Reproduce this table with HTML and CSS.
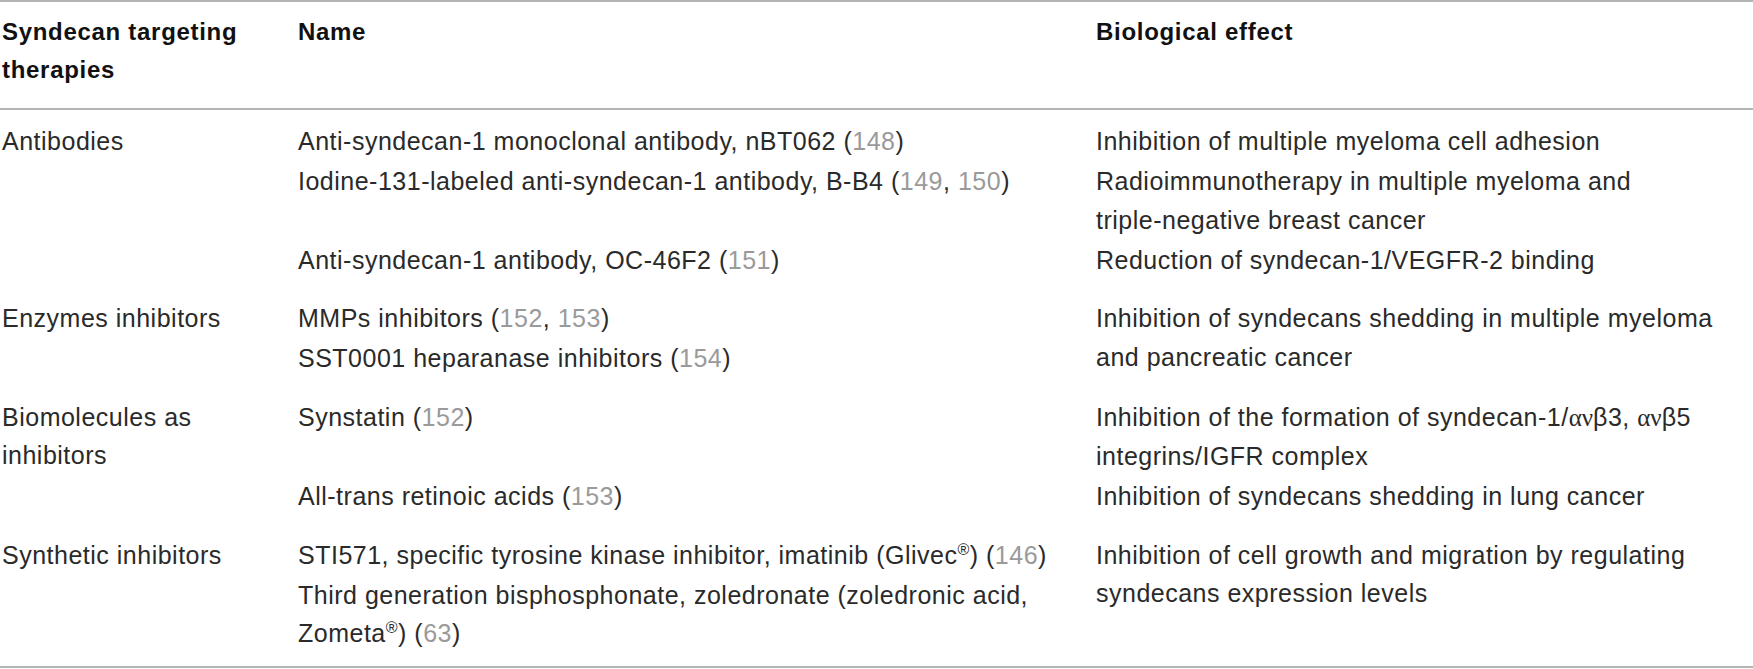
FILE: index.html
```html
<!DOCTYPE html>
<html lang="en">
<head>
<meta charset="utf-8">
<title>Syndecan targeting therapies</title>
<link rel="stylesheet" href="styles.css">
</head>
<body>
<div class="tbl">
  <div class="head">
    <div class="c1">Syndecan targeting<br>therapies</div>
    <div class="c2">Name</div>
    <div class="c3">Biological effect</div>
  </div>

  <div class="group first">
    <div class="c1 span3">Antibodies</div>
    <div class="c2">Anti-syndecan-1 monoclonal antibody, nBT062 (<span class="ref">148</span>)</div>
    <div class="c3">Inhibition of multiple myeloma cell adhesion</div>
    <div class="c2">Iodine-131-labeled anti-syndecan-1 antibody, B-B4 (<span class="ref">149</span>, <span class="ref">150</span>)</div>
    <div class="c3">Radioimmunotherapy in multiple myeloma and<br>triple-negative breast cancer</div>
    <div class="c2">Anti-syndecan-1 antibody, OC-46F2 (<span class="ref">151</span>)</div>
    <div class="c3">Reduction of syndecan-1/VEGFR-2 binding</div>
  </div>

  <div class="group">
    <div class="c1 span2">Enzymes inhibitors</div>
    <div class="c2">MMPs inhibitors (<span class="ref">152</span>, <span class="ref">153</span>)</div>
    <div class="c3 span2">Inhibition of syndecans shedding in multiple myeloma<br>and pancreatic cancer</div>
    <div class="c2">SST0001 heparanase inhibitors (<span class="ref">154</span>)</div>
  </div>

  <div class="group">
    <div class="c1 span2">Biomolecules as<br>inhibitors</div>
    <div class="c2">Synstatin (<span class="ref">152</span>)</div>
    <div class="c3">Inhibition of the formation of syndecan-1/<span class="gr">αν</span>β3, <span class="gr">αν</span>β5<br>integrins/IGFR complex</div>
    <div class="c2">All-trans retinoic acids (<span class="ref">153</span>)</div>
    <div class="c3">Inhibition of syndecans shedding in lung cancer</div>
  </div>

  <div class="group last">
    <div class="c1 span2">Synthetic inhibitors</div>
    <div class="c2">STI571, specific tyrosine kinase inhibitor, imatinib (Glivec<sup>®</sup>) (<span class="ref">146</span>)</div>
    <div class="c3 span2">Inhibition of cell growth and migration by regulating<br>syndecans expression levels</div>
    <div class="c2">Third generation bisphosphonate, zoledronate (zoledronic acid,<br>Zometa<sup>®</sup>) (<span class="ref">63</span>)</div>
  </div>
</div>
</body>
</html>
```

FILE: styles.css
```css
html, body {
  margin: 0;
  padding: 0;
  background: #ffffff;
}

body {
  font-family: "Liberation Sans", Arial, sans-serif;
  font-size: 25px;
  letter-spacing: 0.5px;
  color: #2a2a2a;
}

.tbl {
  width: 1753px;
  border-top: 2px solid #b4b4b4;
  border-bottom: 2px solid #b4b4b4;
}

.head,
.group {
  display: grid;
  grid-template-columns: 296px 798px 1fr;
  padding-left: 2px;
  white-space: nowrap;
}

.head {
  font-size: 24px;
  letter-spacing: 0.7px;
  font-weight: bold;
  color: #111111;
  line-height: 38px;
  padding-top: 11px;
  padding-bottom: 19px;
  border-bottom: 2px solid #b4b4b4;
}

.group {
  line-height: 38.5px;
  row-gap: 1.5px;
  padding-top: 10px;
  padding-bottom: 10px;
}

.group.first {
  padding-top: 12px;
}

.group.last {
  padding-bottom: 13px;
}

.c1 {
  grid-column: 1;
}

.c2 {
  grid-column: 2;
}

.c3 {
  grid-column: 3;
}

.span2 {
  grid-row: span 2;
}

.span3 {
  grid-row: span 3;
}

.ref {
  color: #9a9a9a;
}

.gr {
  font-family: "Liberation Serif", "Times New Roman", serif;
  letter-spacing: 0;
}

sup {
  font-size: 16px;
  line-height: 0;
  vertical-align: 9px;
}
```
